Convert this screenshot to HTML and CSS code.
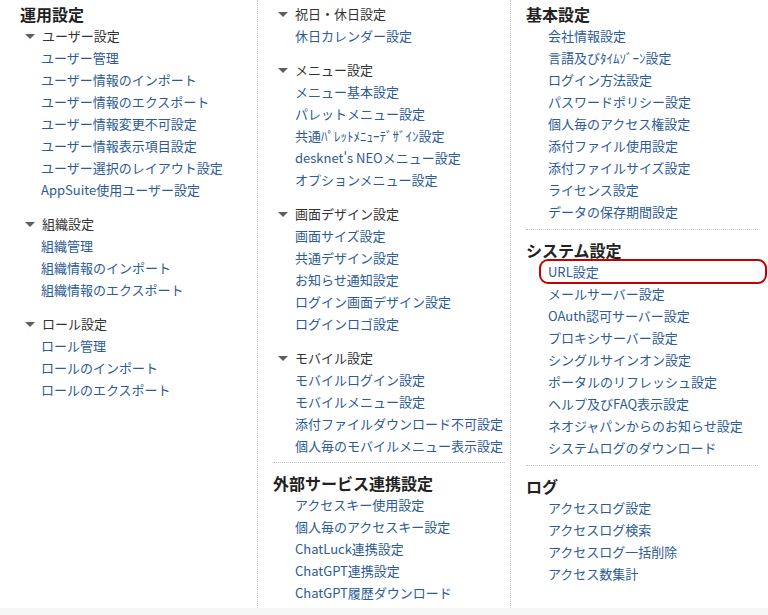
FILE: index.html
```html
<!DOCTYPE html>
<html lang="ja">
  <head>
    <meta charset="UTF-8" />
    <title>管理者設定</title>
    <link rel="stylesheet" href="styles.css">
  </head>
  <body>
    <div class="admin-menu">
      <div class="column first">
        <h2 class="heading">運用設定</h2>
        <div class="group">
          <div class="group-title"><span class="caret"></span>ユーザー設定</div>
          <ul class="links">
            <li><a href="#">ユーザー管理</a></li>
            <li><a href="#">ユーザー情報のインポート</a></li>
            <li><a href="#">ユーザー情報のエクスポート</a></li>
            <li><a href="#">ユーザー情報変更不可設定</a></li>
            <li><a href="#">ユーザー情報表示項目設定</a></li>
            <li><a href="#">ユーザー選択のレイアウト設定</a></li>
            <li><a href="#">AppSuite使用ユーザー設定</a></li>
          </ul>
        </div>
        <div class="group">
          <div class="group-title"><span class="caret"></span>組織設定</div>
          <ul class="links">
            <li><a href="#">組織管理</a></li>
            <li><a href="#">組織情報のインポート</a></li>
            <li><a href="#">組織情報のエクスポート</a></li>
          </ul>
        </div>
        <div class="group">
          <div class="group-title"><span class="caret"></span>ロール設定</div>
          <ul class="links">
            <li><a href="#">ロール管理</a></li>
            <li><a href="#">ロールのインポート</a></li>
            <li><a href="#">ロールのエクスポート</a></li>
          </ul>
        </div>
      </div>

      <div class="column">
        <div class="group">
          <div class="group-title"><span class="caret"></span>祝日・休日設定</div>
          <ul class="links">
            <li><a href="#">休日カレンダー設定</a></li>
          </ul>
        </div>
        <div class="group">
          <div class="group-title"><span class="caret"></span>メニュー設定</div>
          <ul class="links">
            <li><a href="#">メニュー基本設定</a></li>
            <li><a href="#">パレットメニュー設定</a></li>
            <li><a href="#">共通ﾊﾟﾚｯﾄﾒﾆｭｰﾃﾞｻﾞｲﾝ設定</a></li>
            <li><a href="#">desknet's NEOメニュー設定</a></li>
            <li><a href="#">オプションメニュー設定</a></li>
          </ul>
        </div>
        <div class="group">
          <div class="group-title"><span class="caret"></span>画面デザイン設定</div>
          <ul class="links">
            <li><a href="#">画面サイズ設定</a></li>
            <li><a href="#">共通デザイン設定</a></li>
            <li><a href="#">お知らせ通知設定</a></li>
            <li><a href="#">ログイン画面デザイン設定</a></li>
            <li><a href="#">ログインロゴ設定</a></li>
          </ul>
        </div>
        <div class="group">
          <div class="group-title"><span class="caret"></span>モバイル設定</div>
          <ul class="links">
            <li><a href="#">モバイルログイン設定</a></li>
            <li><a href="#">モバイルメニュー設定</a></li>
            <li><a href="#">添付ファイルダウンロード不可設定</a></li>
            <li><a href="#">個人毎のモバイルメニュー表示設定</a></li>
          </ul>
        </div>
        <hr class="divider">
        <h2 class="heading">外部サービス連携設定</h2>
        <ul class="links">
          <li><a href="#">アクセスキー使用設定</a></li>
          <li><a href="#">個人毎のアクセスキー設定</a></li>
          <li><a href="#">ChatLuck連携設定</a></li>
          <li><a href="#">ChatGPT連携設定</a></li>
          <li><a href="#">ChatGPT履歴ダウンロード</a></li>
        </ul>
      </div>

      <div class="column last">
        <h2 class="heading">基本設定</h2>
        <ul class="links">
          <li><a href="#">会社情報設定</a></li>
          <li><a href="#">言語及びﾀｲﾑｿﾞｰﾝ設定</a></li>
          <li><a href="#">ログイン方法設定</a></li>
          <li><a href="#">パスワードポリシー設定</a></li>
          <li><a href="#">個人毎のアクセス権設定</a></li>
          <li><a href="#">添付ファイル使用設定</a></li>
          <li><a href="#">添付ファイルサイズ設定</a></li>
          <li><a href="#">ライセンス設定</a></li>
          <li><a href="#">データの保存期間設定</a></li>
        </ul>
        <hr class="divider">
        <h2 class="heading">システム設定</h2>
        <ul class="links">
          <li class="marked"><a href="#">URL設定</a></li>
          <li><a href="#">メールサーバー設定</a></li>
          <li><a href="#">OAuth認可サーバー設定</a></li>
          <li><a href="#">プロキシサーバー設定</a></li>
          <li><a href="#">シングルサインオン設定</a></li>
          <li><a href="#">ポータルのリフレッシュ設定</a></li>
          <li><a href="#">ヘルプ及びFAQ表示設定</a></li>
          <li><a href="#">ネオジャパンからのお知らせ設定</a></li>
          <li><a href="#">システムログのダウンロード</a></li>
        </ul>
        <hr class="divider">
        <h2 class="heading">ログ</h2>
        <ul class="links">
          <li><a href="#">アクセスログ設定</a></li>
          <li><a href="#">アクセスログ検索</a></li>
          <li><a href="#">アクセスログ一括削除</a></li>
          <li><a href="#">アクセス数集計</a></li>
        </ul>
      </div>
    </div>
  </body>
</html>
```

FILE: styles.css
```css
:root {
  --link-color: #2c5b96;
  --text-color: #333333;
  --heading-color: #222222;
  --rule-color: #c4c4c4;
  --mark-color: #c40000;
}

body {
  margin: 0;
  background-color: #f6f6f6;
  color: var(--text-color);
  font-family: "Noto Sans CJK JP", "Noto Sans", sans-serif;
  font-size: 13px;
}

.admin-menu {
  display: flex;
  height: 608px;
  background-color: #ffffff;
  overflow: hidden;
}

.column {
  width: 253px;
  padding: 3px 5px 0 15px;
  border-left: 1px dotted var(--rule-color);
  box-sizing: border-box;
}

.column.first {
  width: 257px;
  padding-left: 20px;
  border-left: none;
}

.column.last {
  flex: 1;
  padding-left: 15px;
  padding-right: 10px;
}

.heading {
  height: 22px;
  margin: 0;
  font-size: 16px;
  font-weight: bold;
  line-height: 22px;
  color: var(--heading-color);
}

.group + .group {
  margin-top: 12px;
}

.group-title {
  display: flex;
  align-items: center;
  height: 22px;
  line-height: 22px;
  color: var(--text-color);
}

.caret {
  width: 0;
  height: 0;
  margin: 0 7px 0 5px;
  border-left: 5px solid transparent;
  border-right: 5px solid transparent;
  border-top: 5px solid #5a5f69;
}

.links {
  list-style: none;
  margin: 0;
  padding: 0 0 0 21px;
}

.column:not(.first) .links {
  padding-left: 22px;
}

.links li {
  height: 22px;
  line-height: 22px;
  white-space: nowrap;
}

.links a {
  color: var(--link-color);
  text-decoration: none;
}

.divider {
  margin: 5px 0 9px;
  border: none;
  border-top: 1px dotted var(--rule-color);
}

.last .divider {
  margin-top: 6px;
  margin-bottom: 9px;
}

.marked {
  position: relative;
}

.marked::after {
  content: "";
  position: absolute;
  top: -2px;
  bottom: -1px;
  left: -9px;
  right: -9px;
  border: 2px solid var(--mark-color);
  border-radius: 9px;
}
```
